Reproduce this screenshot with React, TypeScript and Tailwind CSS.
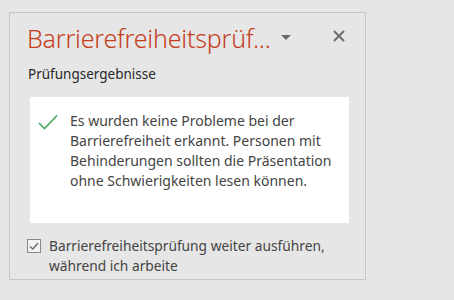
import React from "react";

const App: React.FC = () => {
  return (
    <div className="w-[454px] h-[300px] bg-[#e6e6e6] pt-[12px] pl-[9px] font-['Noto_Sans',sans-serif]">
      <div className="w-[357px] h-[268px] border border-[#c6c6c6] flex flex-col">
        {/* Title */}
        <div className="flex items-center h-[48px] pl-[17px] pr-[20px] pt-[3px]">
          <span className="text-[25px] font-light text-[#c43e1c] leading-none tracking-[-0.2px]">
            Barrierefreiheitsprüf...
          </span>
          <svg width="10" height="5" viewBox="0 0 10 5" className="ml-[10px] mt-[-2px]">
            <path d="M0 0 H10 L5 5 Z" fill="#6b6b6b" />
          </svg>
          <svg width="12" height="12" viewBox="0 0 12 12" className="ml-auto mt-[-6px]">
            <path d="M1 1 L11 11 M11 1 L1 11" stroke="#6b6b6b" strokeWidth="2" />
          </svg>
        </div>

        <div className="pl-[18px] text-[13.5px] text-[#262626] leading-[20px] mt-[3px]">Prüfungsergebnisse</div>

        {/* Result box */}
        <div className="ml-[20px] mt-[13px] w-[319px] h-[126px] bg-white flex pt-[14px] pl-[8px]">
          <svg width="20" height="16" viewBox="0 0 20 16" className="mt-[3px] shrink-0">
            <path d="M1 9 L6.5 14.5 L19 1.5" stroke="#4aa85c" strokeWidth="1.6" fill="none" />
          </svg>
          <p className="ml-[12px] text-[14px] leading-[20px] text-[#444444] w-[279px]">
            Es wurden keine Probleme bei der Barrierefreiheit erkannt. Personen mit Behinderungen sollten die Präsentation ohne Schwierigkeiten lesen können.
          </p>
        </div>

        {/* Checkbox */}
        <div className="flex pl-[17px] mt-[13px]">
          <div className="w-[14px] h-[14px] border border-[#8a8a8a] bg-[#f2f2f2] flex items-center justify-center mt-[3px] shrink-0">
            <svg width="10" height="8" viewBox="0 0 10 8">
              <path d="M1 4.5 L3.8 7 L9 1" stroke="#666666" strokeWidth="1.3" fill="none" />
            </svg>
          </div>
          <p className="ml-[8px] text-[13.75px] leading-[20px] text-[#444444] w-[295px]">
            Barrierefreiheitsprüfung weiter ausführen, während ich arbeite
          </p>
        </div>
      </div>
    </div>
  );
};

export default App;
